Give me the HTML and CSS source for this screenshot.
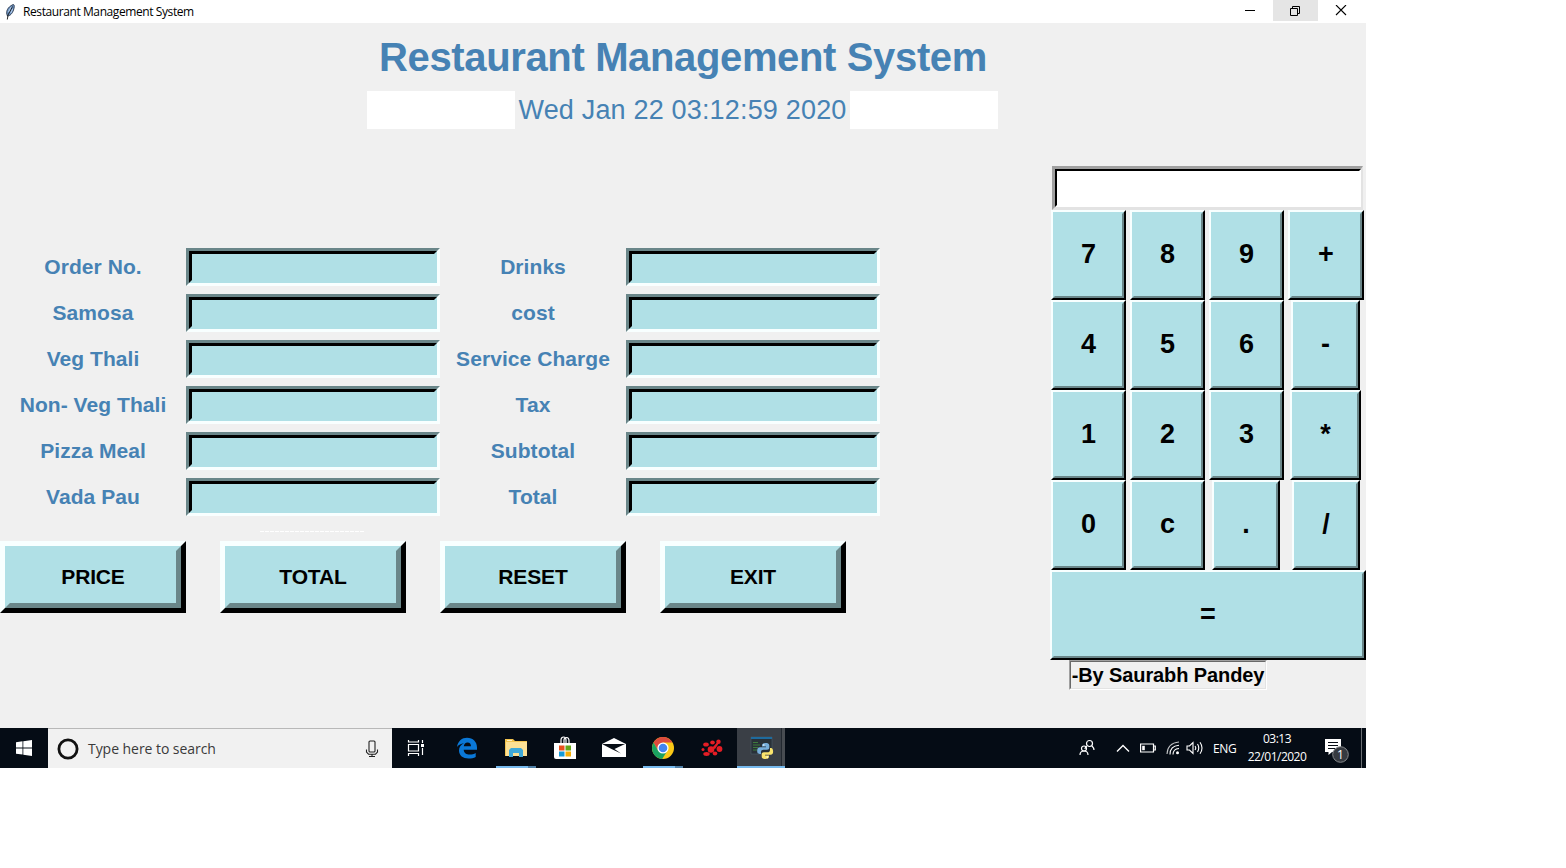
FILE: index.html
```html
<!DOCTYPE html>
<html lang="en">
<head>
<meta charset="utf-8">
<title>Restaurant Management System</title>
<link rel="stylesheet" href="styles.css">
</head>
<body>
<div class="screen">
  <header class="titlebar">
    <svg class="feather" width="12" height="18" viewBox="0 0 12 18"><path d="M3.500 13C1.300 9 3.500 4 9 1.600C10.700 1.300 10.500 4 9.500 7C8.300 10.500 6 13 3.500 13Z" fill="#6f95c4" stroke="#28364a" stroke-width=".9"/><path d="M3.300 16.500L4 12L8.500 3.500" stroke="#111" stroke-width=".9" fill="none"/><path d="M4.500 9L7 4M6.800 10L8.700 6" stroke="#bdd4ee" stroke-width=".9"/></svg>
    <span class="caption">Restaurant Management System</span>
    <div class="controls">
      <span class="ctl"><svg width="12" height="12" viewBox="0 0 12 12"><path d="M1 5.500H11" stroke="#000"/></svg></span>
      <span class="ctl on"><svg width="12" height="12" viewBox="0 0 12 12" fill="none" stroke="#000"><path d="M1.500 3.500H8.500V10.500H1.500ZM3.500 3.500V1.500H10.500V8.500H8.500"/></svg></span>
      <span class="ctl close"><svg width="12" height="12" viewBox="0 0 12 12"><path d="M1 0L11 10M11 0L1 10" stroke="#000" stroke-width="1.100"/></svg></span>
    </div>
  </header>

  <main class="window">
    <h1 class="heading">Restaurant Management System</h1>
    <div class="date-row"><i class="blank"></i><span class="date">Wed Jan 22 03:12:59 2020</span><i class="blank"></i></div>
    <div class="body">
      <section class="order">
        <div class="fields">
          <label>Order No.</label><div class="entry"><div></div></div><label>Drinks</label><div class="entry"><div></div></div>
          <label>Samosa</label><div class="entry"><div></div></div><label>cost</label><div class="entry"><div></div></div>
          <label>Veg Thali</label><div class="entry"><div></div></div><label>Service Charge</label><div class="entry"><div></div></div>
          <label>Non- Veg Thali</label><div class="entry"><div></div></div><label>Tax</label><div class="entry"><div></div></div>
          <label>Pizza Meal</label><div class="entry"><div></div></div><label>Subtotal</label><div class="entry"><div></div></div>
          <label>Vada Pau</label><div class="entry"><div></div></div><label>Total</label><div class="entry"><div></div></div>
        </div>
        <div class="dashes"></div>
        <div class="actions">
          <div class="action"><div>PRICE</div></div>
          <div class="action"><div>TOTAL</div></div>
          <div class="action"><div>RESET</div></div>
          <div class="action"><div>EXIT</div></div>
        </div>
      </section>
      <section class="calc">
        <div class="display"><div></div></div>
        <div class="keys">
          <div class="key"><div>7</div></div><div class="key"><div>8</div></div><div class="key"><div>9</div></div><div class="key plus"><div>+</div></div>
          <div class="key"><div>4</div></div><div class="key"><div>5</div></div><div class="key"><div>6</div></div><div class="key minus"><div>-</div></div>
          <div class="key"><div>1</div></div><div class="key"><div>2</div></div><div class="key"><div>3</div></div><div class="key times"><div>*</div></div>
          <div class="key"><div>0</div></div><div class="key"><div>c</div></div><div class="key dot"><div>.</div></div><div class="key slash"><div>/</div></div>
          <div class="key equals"><div>=</div></div>
        </div>
        <div class="author"><div>-By Saurabh Pandey</div></div>
      </section>
    </div>
  </main>

  <footer class="taskbar">
    <div class="start"><svg width="16" height="16" viewBox="0 0 16 16" fill="#fff"><path d="M0 2.200L6.500 1.300V7.500H0ZM7.300 1.200L16 0V7.500H7.300ZM0 8.400H6.500V14.600L0 13.700ZM7.300 8.400H16V16L7.300 14.700Z"/></svg></div>
    <div class="search">
      <svg width="22" height="22" viewBox="0 0 22 22"><circle cx="11" cy="11" r="9.100" fill="none" stroke="#111" stroke-width="2.800"/></svg>
      <span>Type here to search</span>
      <svg class="mic" width="14" height="18" viewBox="0 0 14 18" fill="none" stroke="#222" stroke-width="1.100"><rect x="4" y="1" width="6" height="11" rx="1"/><path d="M1.500 9.500V12L3.500 14.200H10.500L12.500 12V9.500M7 14V16.500M4 16.500H10"/></svg>
    </div>
    <div class="tasks">
      <div class="task"><svg width="18" height="18" viewBox="0 0 18 18" fill="none" stroke="#fff" stroke-width="1.200"><path d="M1.500 5.500H11.500V12H1.500ZM1.500 1V3H11.500V1M1.500 17V14.500H11.500V17M15.500 1V4M15.500 9V16"/><path d="M14 5H17V8H14Z" fill="#fff" stroke="none"/></svg></div>
      <div class="task"><svg width="22" height="22" viewBox="0 0 22 22"><path d="M1 10C2 4 6 .8 11 .8C17 .8 21 5 21 10.500V12.700H7.700C8 16 10.500 17.500 13.500 17.500C16 17.500 18 16.900 19.700 15.900V20C17.700 21 15.300 21.500 12.500 21.500C7 21.500 3 18.500 3 13.500C3 10.500 4.700 7.700 8 6.300C5 6.600 2.500 8 1 10ZM7.800 9.300H15C15 6.800 13.800 5.400 11.600 5.400C9.400 5.400 8.100 7 7.800 9.300Z" fill="#0a78d7" fill-rule="evenodd"/></svg></div>
      <div class="task running"><svg width="22" height="20" viewBox="0 0 22 20"><path d="M0 1H8L10 3H22V18H0Z" fill="#f3c44f"/><path d="M1 4H22V18H1Z" fill="#fce195"/><path d="M2 2H7V3H2Z" fill="#fff2c4"/><path d="M4 19V12L6 10H16L18 12V19H14V15H8V19Z" fill="#3fa9d8"/></svg></div>
      <div class="task"><svg width="24" height="24" viewBox="0 0 24 24"><path d="M8 7V4C8 0 13 0 13 4V7M11 7V4C11 1 16 0 16 5V7" fill="none" stroke="#fff" stroke-width="1.200"/><path d="M1 7H23V23H3Q1 23 1 21Z" fill="#fff"/><path d="M6 9.500H11.500V14.500H6Z" fill="#e94f1c"/><path d="M12.500 9.500H18V14.500H12.500Z" fill="#65a618"/><path d="M6 15.500H11.500V20.500H6Z" fill="#169bd8"/><path d="M12.500 15.500H18V20.500H12.500Z" fill="#f5ae08"/></svg></div>
      <div class="task"><svg width="24" height="20" viewBox="0 0 24 20"><path d="M0 6L12 0L24 6V19H0Z" fill="#fff"/><path d="M0 6H23L12.500 11L19 15.500L9.500 11Z" fill="#070d15"/></svg></div>
      <div class="task running"><svg width="22" height="22" viewBox="0 0 22 22"><circle cx="11" cy="11" r="11" fill="#fbc916"/><path d="M1.500 5.500A11 11 0 0 1 20.500 5.500H11L6.200 13.700Z" fill="#dd4b3e"/><path d="M1.500 5.500A11 11 0 0 0 10.200 22L15.500 13.500L6.200 13.700Z" fill="#1aa260"/><circle cx="11" cy="11" r="5.600" fill="#fff"/><circle cx="11" cy="11" r="4.300" fill="#4385f1"/></svg></div>
      <div class="task"><svg width="22" height="18" viewBox="0 0 22 18" fill="#e51d25"><circle cx="10" cy="10.500" r="3.300"/><ellipse cx="5" cy="5.500" rx="2.800" ry="2"/><ellipse cx="11.500" cy="3.500" rx="2.300" ry="2"/><circle cx="17.500" cy="2.800" r="2.200"/><circle cx="18.500" cy="10" r="2.900"/><ellipse cx="14" cy="14.500" rx="2.300" ry="2"/><ellipse cx="5.500" cy="15" rx="3.200" ry="1.900"/><circle cx="2" cy="10.500" r="1.500"/><path d="M11 9L16.500 3L18 4L14 10Z"/></svg></div>
      <div class="task active"><svg width="24" height="24" viewBox="0 0 24 24"><path d="M1 1H22V18H1Z" fill="#293138" stroke="#4a5c68" stroke-width=".6"/><path d="M1 1H22V3H1Z" fill="#1e6b9e"/><path d="M3 6.500H8M3 9H10M3 11.500H8M3 14H7" stroke="#3d7a3d" stroke-width="1.100"/><path d="M15.500 7C11.500 7 12 9.200 12 10.500H16V11.300H10C7.500 11.300 7 13.500 7.200 15.500C7.400 18 9 18 11 18V16C11 14.500 12 13.700 13.500 13.700H17C18.500 13.700 19.300 13 19.300 11.500V9.500C19.300 7.500 17.500 7 15.500 7Z" fill="#77aedb"/><path d="M15.500 23C19.500 23 19 20.800 19 19.500H15V18.700H20.500C23 18.700 23.300 16.500 23 14.500C22.700 12 21.500 12 20 12V14C20 15.500 19 16.300 17.500 16.300H14C12.500 16.300 11.700 17 11.700 18.500V20.500C11.700 22.500 13.500 23 15.500 23Z" fill="#fae46c"/><circle cx="13.800" cy="9" r=".8" fill="#fff"/><circle cx="17.200" cy="21" r=".8" fill="#fff"/></svg></div>
    </div>
    <div class="tray">
      <svg width="16" height="18" viewBox="0 0 16 18" fill="none" stroke="#fff" stroke-width="1.200"><circle cx="10.500" cy="4.500" r="3"/><path d="M8 7Q6 8 6 10M13 7Q15 9 15 11"/><circle cx="5" cy="9.500" r="2.500"/><path d="M1 16Q1 12 5 12Q9 12 9 16"/></svg>
      <svg width="14" height="10" viewBox="0 0 14 10" fill="none" stroke="#fff" stroke-width="1.400"><path d="M1 8.500L7 2.500L13 8.500"/></svg>
      <svg width="16" height="10" viewBox="0 0 16 10"><path d="M.6 1H13.500V9H.6ZM14 3H15.300V7H14" fill="none" stroke="#fff" stroke-width="1.200"/><path d="M2.200 2.800H4.800V7.200H2.200Z" fill="#fff"/></svg>
      <svg width="14" height="14" viewBox="0 0 14 14" fill="none" stroke="#fff" stroke-width="1.100"><path d="M1 13Q1.500 2 13 1" opacity=".75"/><path d="M4 13.500Q4 5 13 4.300M7 13.500Q7 8 13 7.500"/><circle cx="11.500" cy="11.800" r="1.500" fill="#fff" stroke="none"/></svg>
      <svg width="18" height="14" viewBox="0 0 18 14" fill="none" stroke="#fff" stroke-width="1.100"><path d="M1 5H3.500L7 1.500V12.500L3.500 9H1ZM9 5Q10.500 7 9 9M11.500 3Q14 7 11.500 11M14 1.200Q18 7 14 12.800"/></svg>
      <span class="lang">ENG</span>
      <span class="clock">03:13<br>22/01/2020</span>
      <svg width="26" height="26" viewBox="0 0 26 26"><path d="M1 1H17V14H8L4.500 17V14H1Z" fill="#fff"/><path d="M4 4.500H14M4 7.500H14M4 10.500H11" stroke="#070d15" stroke-width="1.100"/><circle cx="16.500" cy="16.500" r="7.800" fill="#363a40" stroke="#85888b" stroke-width="1"/><text x="16.500" y="20.800" class="count">1</text></svg>
    </div>
  </footer>
</div>
</body>
</html>
```

FILE: styles.css
```css
* { box-sizing: border-box; }
body { margin: 0; background: #fff; font-family: "Liberation Sans", Arial, sans-serif; }
svg { display: block; flex: none; }
.screen { width: 1366px; height: 768px; display: flex; flex-direction: column; }

.titlebar { height: 23px; flex: none; display: flex; align-items: center; padding-left: 4px; background: #fff; }
.caption { margin-left: 7px; font: 12px/16px "Open Sans", "Noto Sans", sans-serif; letter-spacing: -.41px; color: #000; white-space: nowrap; }
.controls { margin-left: auto; display: flex; align-self: flex-start; padding-right: 3px; }
.ctl { width: 45px; height: 21px; display: flex; align-items: center; justify-content: center; padding-right: 1px; }
.ctl.on { background: #e5e5e5; }
.ctl.close { padding-right: 0; }

.window { flex: 1; background: #f0f0f0; padding-top: 11px; color: #4682b4; }
.heading { margin: 0; font-size: 40px; line-height: 46px; letter-spacing: -.36px; text-align: center; }
.date-row { margin-top: 11px; height: 38px; display: flex; justify-content: center; gap: 3px; padding-right: 1px; }
.blank { width: 148px; background: #fff; }
.date { width: 329px; font-size: 27px; line-height: 39px; letter-spacing: .18px; text-align: center; white-space: nowrap; }
.body { display: flex; padding-top: 37px; }

.order { width: 1050px; padding-top: 82px; }
.fields { display: grid; grid-template-columns: 186px 254px 186px 254px; row-gap: 8px; }
.fields label { font-size: 21px; font-weight: bold; line-height: 38px; letter-spacing: .06px; text-align: center; white-space: nowrap; }
.entry { height: 38px; border: 3px solid; border-color: #6a8689 #f8ffff #f8ffff #6a8689; }
.entry div { height: 32px; background: #b0e0e6; border: 3px solid; border-color: #000 #b0e0e6 #b0e0e6 #000; }
.dashes { width: 104px; height: 1px; margin: 15px 0 9px 260px; background: repeating-linear-gradient(90deg, #fff 0 4px, #f0f0f0 4px 5px); }
.actions { display: flex; gap: 34px; color: #000; font-size: 21px; font-weight: bold; text-align: center; }
.action { width: 186px; height: 72px; border: 5px solid; border-color: #f8ffff #000 #000 #f8ffff; }
.action div { height: 62px; line-height: 52px; letter-spacing: -.15px; background: #b0e0e6; border: 5px solid; border-color: #b0e0e6 #6a8689 #6a8689 #b0e0e6; }

.calc { width: 316px; color: #000; font-weight: bold; }
.display { width: 311px; height: 44px; margin-left: 2px; border: 3px solid; border-width: 3px 2px 3px 3px; border-color: #a0a0a0 #e3e3e3 #e3e3e3 #a0a0a0; }
.display div { height: 38px; background: #fff; border: 2px solid; border-color: #000 #fff #fff #000; }
.keys { display: grid; grid-template-columns: repeat(4, 79px); grid-auto-rows: 90px; font-size: 27px; text-align: center; }
.key { width: 75px; margin-left: 1px; border: 2px solid; border-color: #f8ffff #000 #000 #f8ffff; }
.key div { height: 86px; line-height: 81px; background: #b0e0e6; border: 2px solid; border-color: #b0e0e6 #6a8689 #6a8689 #b0e0e6; }
.plus { width: 76px; }
.minus { width: 69px; margin-left: 4px; }
.times { width: 71px; margin-left: 3px; }
.dot { width: 68px; margin-left: 4px; }
.slash { width: 68px; margin-left: 5px; }
.equals { grid-column: 1 / -1; width: 316px; margin-left: 0; }
.author { width: 198px; height: 30px; margin-left: 19px; border: 1px solid; border-color: #a0a0a0 #fff #fff #a0a0a0; font-size: 20px; line-height: 26px; text-align: center; white-space: nowrap; }
.author div { height: 28px; border: 1px solid; border-color: #696969 #e3e3e3 #e3e3e3 #696969; letter-spacing: -.1px; }

.taskbar { height: 40px; flex: none; display: flex; background: #050c15; color: #fff; font-family: "Open Sans", "Noto Sans", sans-serif; }
.start { width: 48px; display: flex; align-items: center; justify-content: center; }
.search { width: 344px; display: flex; align-items: center; padding: 0 13px 0 9px; background: #f1f1f1; border-top: 1px solid #b8b8b8; color: #3a3a3a; font-size: 14px; letter-spacing: -.05px; }
.search span { margin-left: 9px; }
.mic { margin-left: auto; }
.tasks { display: flex; }
.task { width: 49px; display: flex; align-items: center; justify-content: center; padding-right: 2px; }
.task:first-child { width: 51px; padding-right: 3px; }
.task.running { background: linear-gradient(90deg, #76b9ed 0 32px, #4f7fa6 32px) 4px 38px / 40px 2px no-repeat; }
.task.active { width: 48px; background: linear-gradient(#76b9ed, #76b9ed) 0 38px / 48px 2px no-repeat, linear-gradient(90deg, #3a3f46 0 44px, #22282f 44px 45px, #484c51 45px); padding: 0 0 0 2px; }
.tray { margin-left: auto; width: 283px; border-right: 1px solid #6a6e73; display: grid; grid-template-columns: 37px 24px 26px 20px 27px 30px 68px 1fr; align-items: center; margin-right: 4px; }
.lang { font-size: 12px; letter-spacing: -.3px; }
.clock { font-size: 12px; line-height: 18px; letter-spacing: -.5px; text-align: center; }
.tray > svg:last-child { margin: 6px 0 0 13px; }
.count { fill: #fff; font: 12px "Open Sans", sans-serif; text-anchor: middle; }
```
